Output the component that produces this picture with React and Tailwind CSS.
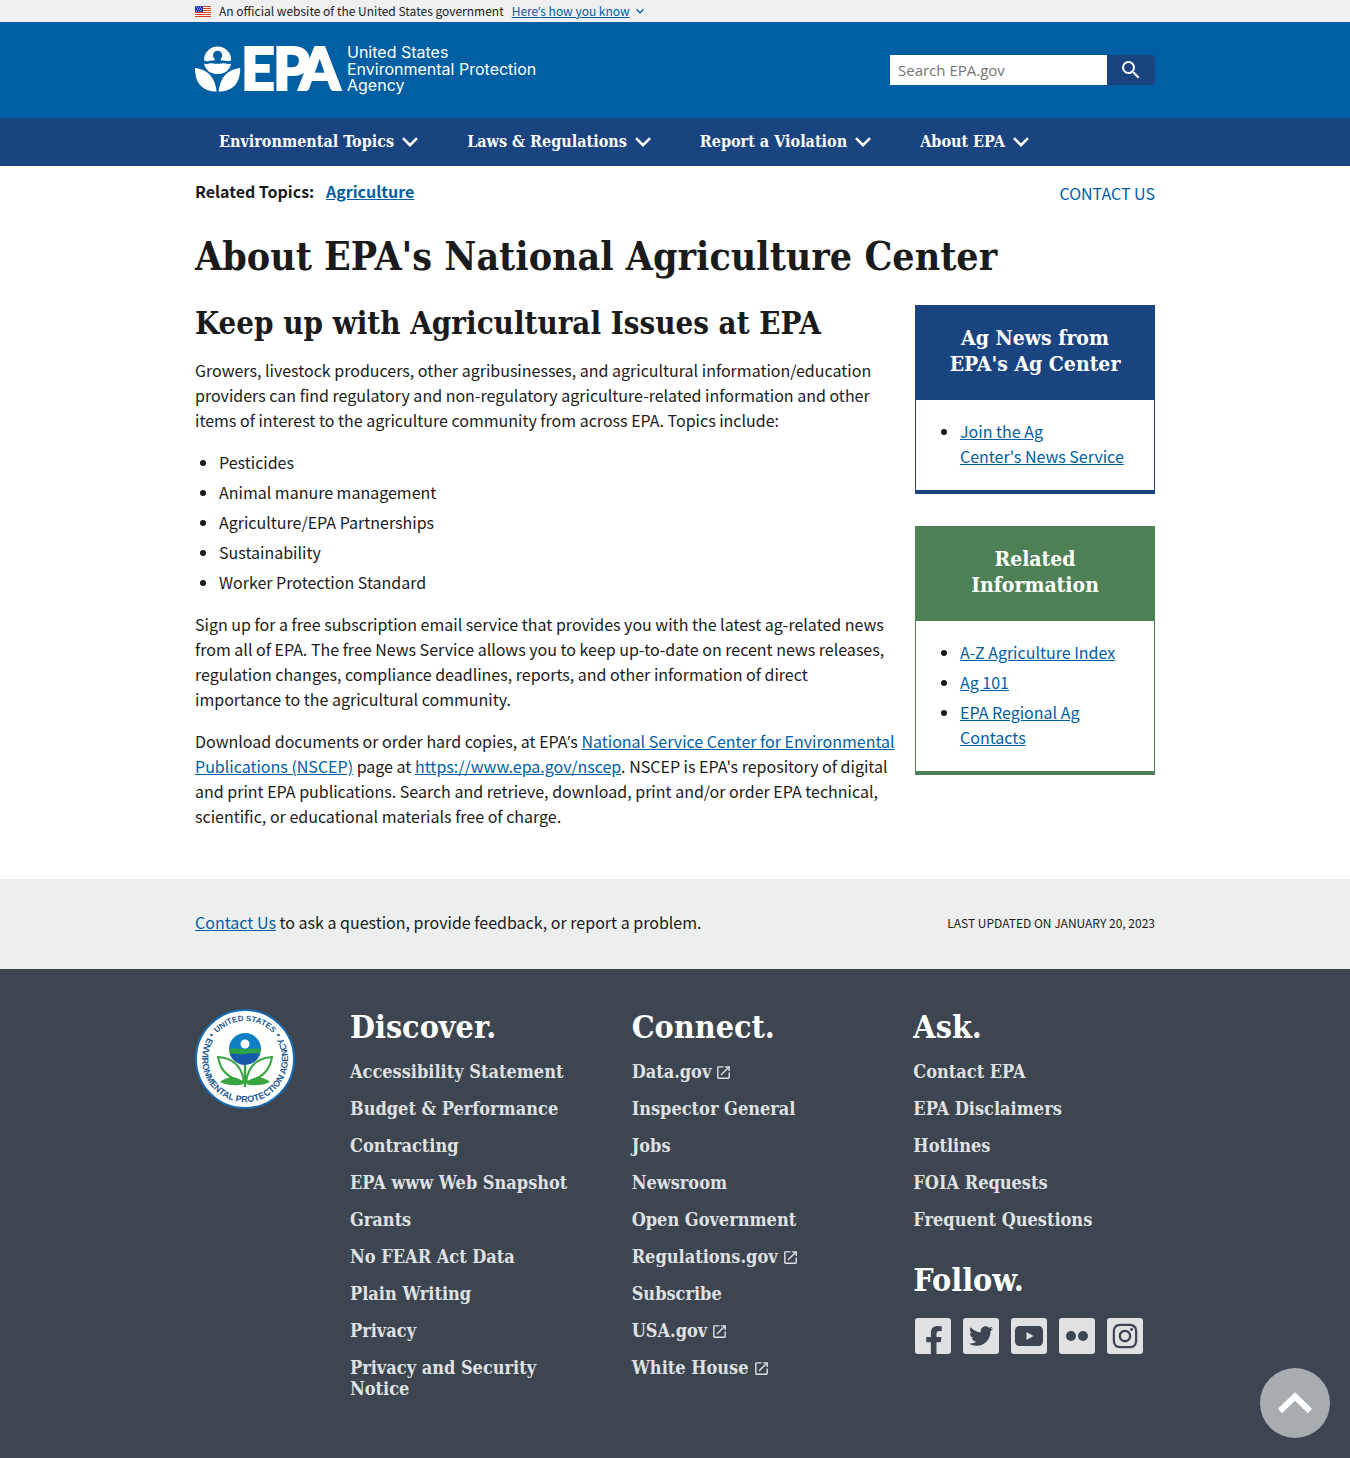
import React from "react";
import { MdExpandMore, MdOpenInNew, MdSearch } from "react-icons/md";
import { FaFacebookF, FaTwitter, FaInstagram } from "react-icons/fa";

const serif = "font-['DejaVu_Serif_Condensed','DejaVu_Serif',serif] font-bold";
const link = "text-[#005ea2] underline";

const topics = [
  "Pesticides",
  "Animal manure management",
  "Agriculture/EPA Partnerships",
  "Sustainability",
  "Worker Protection Standard",
];

const discover = [
  "Accessibility Statement",
  "Budget & Performance",
  "Contracting",
  "EPA www Web Snapshot",
  "Grants",
  "No FEAR Act Data",
  "Plain Writing",
  "Privacy",
  "Privacy and Security Notice",
];
const connect = [
  "Data.gov",
  "Inspector General",
  "Jobs",
  "Newsroom",
  "Open Government",
  "Regulations.gov",
  "Subscribe",
  "USA.gov",
  "White House",
];
const external = ["Data.gov", "Regulations.gov", "USA.gov", "White House"];
const ask = ["Contact EPA", "EPA Disclaimers", "Hotlines", "FOIA Requests", "Frequent Questions"];

// The CJK family draws this mark full-width, so it comes from a Latin family.
function Apostrophe() {
  return <span className="font-['Open_Sans',sans-serif] leading-none">’</span>;
}

function Flag() {
  return (
    <svg viewBox="0 0 16 11" className="h-[11px] w-4" aria-hidden="true">
      <rect width="16" height="11" fill="#fff" />
      {[0, 2, 4, 6, 8, 10].map((y) => (
        <rect key={y} y={y} width="16" height="1" fill="#db3e1f" />
      ))}
      <rect width="8" height="6" fill="#1e33b1" />
      {[1, 3, 5].map((y) =>
        [1, 3, 5].map((x) => <rect key={x + "-" + y} x={x + (y === 3 ? 1 : 0)} y={y - 0.5} width="1" height="1" fill="#c9cff2" />)
      )}
    </svg>
  );
}

function EpaLogo() {
  return (
    <svg viewBox="0 -14 348 76" className="h-[76px] w-[348px]" role="img" aria-label="United States Environmental Protection Agency">
      <g fill="#fff">
        <path d="M9 14.2A13.6 13.6 0 0 1 36.2 14.2C33 16.2 30.5 14.4 27.5 14.6C25.5 14.7 24.8 13.8 26 12.4A4.6 4.6 0 1 0 19.2 12.4C20.4 13.8 19.7 14.7 17.7 14.6C14.7 14.4 12.2 16.2 9 14.2Z" />
        <path d="M9 17.4C12.5 18.8 15 17 18 17.4C21 17.8 24 17.8 27 17.4C30 17 32.5 18.8 36.2 17.4C35 23.6 30 28 22.6 28C15.2 28 10.2 23.6 9 17.4Z" />
        <path d="M0 22C10 23.4 19.5 28 21.6 45.5C8 45.5 0 38 0 22Z" />
        <path d="M45.2 22C35.2 23.4 25.7 28 23.6 45.5C37.2 45.5 45.2 38 45.2 22Z" />
      </g>
      <text x="46 78 104" y="44" fill="#fff" stroke="#fff" strokeWidth="2" className="font-['Lato',sans-serif] text-[59px] font-black">EPA</text>
      <g fill="#fff" className="font-['Inter',sans-serif] text-[16px]">
        <text x="152" y="12">United States</text>
        <text x="152" y="29">Environmental Protection</text>
        <text x="152" y="45">Agency</text>
      </g>
    </svg>
  );
}

function Seal() {
  return (
    <svg viewBox="0 0 100 100" className="h-[100px] w-[100px]" role="img" aria-label="U.S. Environmental Protection Agency seal">
      <defs>
        <path id="seal-top" d="M12 50A38 38 0 0 1 88 50" />
        <path id="seal-bottom" d="M14.5 26A43 43 0 1 0 85.5 26" />
        <clipPath id="seal-globe">
          <circle cx="50" cy="40" r="16" />
        </clipPath>
      </defs>
      <circle cx="50" cy="50" r="49" fill="#fff" stroke="#1a6db5" strokeWidth="2" />
      <g fill="#1f5c93" className="font-['Liberation_Sans',sans-serif] font-bold">
        <text textAnchor="middle" className="text-[8px]">
          <textPath href="#seal-top" startOffset="50%">UNITED STATES</textPath>
        </text>
        <text textAnchor="middle" className="text-[9px]">
          <textPath href="#seal-bottom" startOffset="50%">ENVIRONMENTAL PROTECTION AGENCY</textPath>
        </text>
        <circle cx="16.5" cy="26" r="1.3" />
        <circle cx="83.5" cy="26" r="1.3" />
      </g>
      <g clipPath="url(#seal-globe)">
        <rect x="34" y="24" width="32" height="18" fill="#0d7fc4" />
        <path d="M34 40C40 39 44 40 50 40S60 39 66 40V46H34Z" fill="#2ca14a" />
        <path d="M34 45C40 44 45 46 50 45S60 44 66 45V57H34Z" fill="#1659a8" />
      </g>
      <circle cx="50" cy="35" r="4.5" fill="#fff" />
      <g fill="none" stroke="#38a53f" strokeWidth="2">
        <path d="M49 73C47 58 38 49 23 48C25 61 34 70 49 73Z" />
        <path d="M51 73C53 58 62 49 77 48C75 61 66 70 51 73Z" />
        <path d="M50 56V78" strokeWidth="2.4" />
      </g>
      <path d="M49 75C44 67 34 66 25 73C33 77 43 77 49 75Z" fill="#38a53f" />
      <path d="M51 75C56 67 66 66 75 73C67 77 57 77 51 75Z" fill="#38a53f" />
    </svg>
  );
}

function SideBox({ title, children, tone }) {
  const green = tone === "green";
  return (
    <section className={`border border-b-4 ${green ? "border-[#4d8055]" : "border-[#1a4480]"}`}>
      <h2 className={`${serif} px-7 pt-[19px] pb-[23px] text-center text-[21px] leading-[26px] text-white ${green ? "bg-[#4d8055]" : "bg-[#1a4480]"}`}>
        {title}
      </h2>
      <ul className="list-disc space-y-[5px] pt-[19px] pr-5 pb-[21px] pl-11">{children}</ul>
    </section>
  );
}

function FooterLinks({ title, items }) {
  return (
    <nav aria-label={title}>
      <h2 className={`${serif} text-[32px] leading-9 text-white`}>{title}</h2>
      <ul className={`${serif} mt-4 space-y-4 pr-4 text-[18px] leading-[21px] text-[#dfe1e2]`}>
        {items.map((t) => (
          <li key={t}>
            <a href="#">
              {t}
              {external.includes(t) && <MdOpenInNew className="ml-1 inline h-[17px] w-[17px] align-[-3px]" />}
            </a>
          </li>
        ))}
      </ul>
    </nav>
  );
}

function Social({ label, children }) {
  return (
    <a href="#" aria-label={label} className="flex h-9 w-9 items-center justify-center overflow-hidden rounded-[3px] bg-[#dfe1e2] text-[#3d4551]">
      {children}
    </a>
  );
}

const wrap = "mx-auto w-full max-w-5xl px-8";

export default function App() {
  return (
    <div className="bg-white font-['Noto_Sans_CJK_SC',sans-serif] text-[16px] leading-[25px] text-[#1b1b1b]">
      <div className="bg-[#f0f0f0]">
        <div className={`${wrap} flex h-[22px] items-center text-[12px] leading-4`}>
          <Flag />
          <span className="ml-2">An official website of the United States government</span>
          <button type="button" className={`${link} ml-2`}>Here<Apostrophe />s how you know</button>
          <MdExpandMore className="ml-0.5 h-4 w-4 text-[#005ea2]" />
        </div>
      </div>

      <header>
        <div className="bg-[#005ea2]">
          <div className={`${wrap} flex h-24 items-center justify-between`}>
            <a href="#"><EpaLogo /></a>
            <form role="search" className="flex" onSubmit={(e) => e.preventDefault()}>
              <input
                type="search"
                aria-label="Search EPA.gov"
                placeholder="Search EPA.gov"
                className="h-[30px] w-[217px] bg-white px-2 font-['Open_Sans',sans-serif] text-[15px] placeholder:text-[#757575]"
              />
              <button type="submit" aria-label="Search" className="flex h-[30px] w-12 items-center justify-center rounded-r bg-[#1a4480] text-white">
                <MdSearch className="h-6 w-6" />
              </button>
            </form>
          </div>
        </div>
        <nav aria-label="Main" className="bg-[#1a4480]">
          <ul className={`${wrap} ${serif} flex h-12 items-center gap-px text-[16px] leading-6 text-white`}>
            {["Environmental Topics", "Laws & Regulations", "Report a Violation", "About EPA"].map((t) => (
              <li key={t} className="px-6">
                <button type="button" className="flex items-center">
                  {t}
                  <svg viewBox="0 0 16 10" className="ml-2 h-[10px] w-4" aria-hidden="true">
                    <path d="M1 1.2L8 8.2L15 1.2" fill="none" stroke="#fff" strokeWidth="2.6" />
                  </svg>
                </button>
              </li>
            ))}
          </ul>
        </nav>
      </header>

      <main className={`${wrap} pb-[50px]`}>
        <div className="flex items-start justify-between pt-[13px]">
          <p className="font-bold">
            Related Topics: <a href="#" className={`${link} ml-2`}>Agriculture</a>
          </p>
          <a href="#" className="mt-0.5 text-[#005ea2]">CONTACT US</a>
        </div>

        <h1 className={`${serif} mt-6 text-[39px] leading-[52px]`}>About EPA's National Agriculture Center</h1>

        <div className="mt-[23px] flex items-start justify-between gap-4">
          <article className="min-w-0 flex-1 space-y-[17px]">
            <h2 className={`${serif} text-[31px] leading-9`}>Keep up with Agricultural Issues at EPA</h2>
            <p>
              Growers, livestock producers, other agribusinesses, and agricultural information/education providers can find
              regulatory and non-regulatory agriculture-related information and other items of interest to the agriculture
              community from across EPA. Topics include:
            </p>
            <ul className="list-disc space-y-[5px] pl-6">
              {topics.map((t) => (
                <li key={t}>{t}</li>
              ))}
            </ul>
            <p>
              Sign up for a free subscription email service that provides you with the latest ag-related news from all of EPA.
              The free News Service allows you to keep up-to-date on recent news releases, regulation changes, compliance
              deadlines, reports, and other information of direct importance{"\u00a0"}to the agricultural community.
            </p>
            <p>
              Download documents or order hard copies, at EPA<Apostrophe />s{" "}
              <a href="#" className={link}>National Service Center for Environmental Publications (NSCEP)</a> page at{" "}
              <a href="#" className={link}>https://www.epa.gov/nscep</a>. NSCEP is EPA's repository of digital and print EPA
              publications. Search and retrieve, download, print and/or order EPA technical, scientific, or educational
              materials free of charge.
            </p>
          </article>

          <aside className="w-60 shrink-0 space-y-8">
            <SideBox title="Ag News from EPA's Ag Center">
              <li><a href="#" className={link}>Join the Ag Center's{"\u00a0"}News{"\u00a0"}Service</a></li>
            </SideBox>
            <SideBox title="Related Information" tone="green">
              <li><a href="#" className={link}>A-Z Agriculture Index</a></li>
              <li><a href="#" className={link}>Ag 101</a></li>
              <li><a href="#" className={link}>EPA Regional Ag Contacts</a></li>
            </SideBox>
          </aside>
        </div>
      </main>

      <footer>
        <div className="bg-[#edefef]">
          <div className={`${wrap} flex h-[90px] items-center justify-between pb-1`}>
            <p><a href="#" className={link}>Contact Us</a> to ask a question, provide feedback, or report a problem.</p>
            <p className="text-[12px]">LAST UPDATED ON JANUARY 20, 2023</p>
          </div>
        </div>
        <div className="bg-[#3d4551]">
          <div className={`${wrap} flex items-start pt-10 pb-[60px]`}>
            <div className="w-[155px] shrink-0"><Seal /></div>
            <div className="grid flex-1 grid-cols-3 gap-x-10">
              <FooterLinks title="Discover." items={discover} />
              <FooterLinks title="Connect." items={connect} />
              <div>
                <FooterLinks title="Ask." items={ask} />
                <h2 className={`${serif} mt-8 text-[32px] leading-9 text-white`}>Follow.</h2>
                <div className="mt-5 ml-0.5 flex gap-3">
                  <Social label="Facebook"><FaFacebookF className="mt-2 ml-0.5 h-[29px] w-[18px]" /></Social>
                  <Social label="Twitter"><FaTwitter className="h-6 w-6" /></Social>
                  <Social label="YouTube">
                    <svg viewBox="0 0 28 20" className="h-5 w-7" aria-hidden="true">
                      <rect width="28" height="20" rx="4.5" fill="currentColor" />
                      <path d="M11.5 6L18.5 10L11.5 14Z" fill="#dfe1e2" />
                    </svg>
                  </Social>
                  <Social label="Flickr">
                    <svg viewBox="0 0 24 12" className="h-3 w-6" aria-hidden="true">
                      <circle cx="6" cy="6" r="5" fill="currentColor" />
                      <circle cx="18" cy="6" r="5" fill="currentColor" />
                    </svg>
                  </Social>
                  <Social label="Instagram"><FaInstagram className="h-7 w-7" /></Social>
                </div>
              </div>
            </div>
          </div>
        </div>
      </footer>

      <a href="#" aria-label="Back to top" className="fixed right-5 bottom-5 flex h-[70px] w-[70px] items-center justify-center rounded-full bg-[#a7acb1]">
        <svg viewBox="0 0 36 24" className="h-6 w-9" aria-hidden="true">
          <path d="M3 20L18 5.5L33 20" fill="none" stroke="#fff" strokeWidth="6" />
        </svg>
      </a>
    </div>
  );
}
